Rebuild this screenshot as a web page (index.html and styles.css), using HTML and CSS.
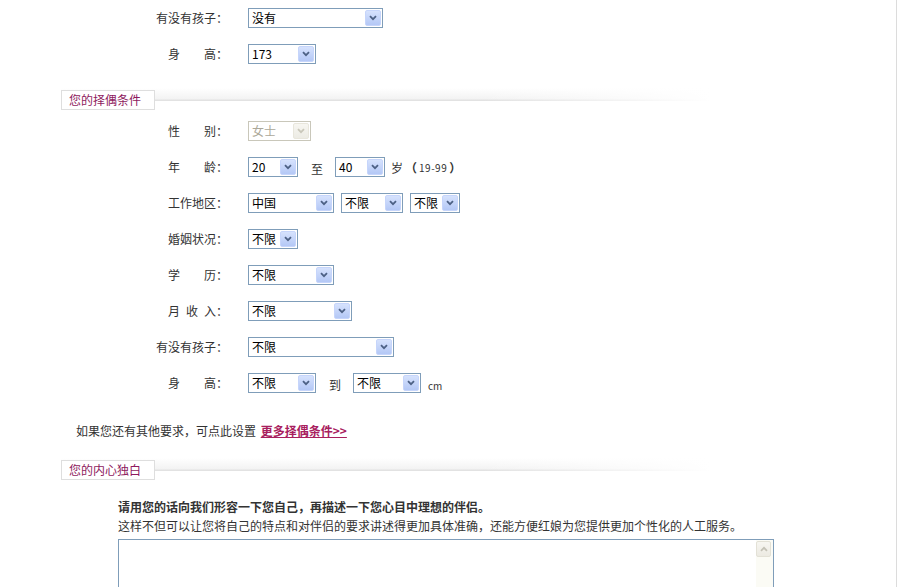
FILE: index.html
```html
<!DOCTYPE html>
<html lang="zh-CN">
<head>
<meta charset="utf-8">
<title>择偶条件</title>
<link rel="stylesheet" href="styles.css">
</head>
<body>
<div class="page">
  <div class="row">
    <span class="lab">有没有孩子：</span>
    <span class="sel w135"><span class="v">没有</span><span class="b"><svg width="8" height="6" viewBox="0 0 8 6"><path d="M1 1.2 L4 4.2 L7 1.2"/></svg></span></span>
  </div>
  <div class="row">
    <span class="lab">身　　高：</span>
    <span class="sel w68"><span class="v">173</span><span class="b"><svg width="8" height="6" viewBox="0 0 8 6"><path d="M1 1.2 L4 4.2 L7 1.2"/></svg></span></span>
  </div>

  <div class="head"><span class="hbox">您的择偶条件</span></div>

  <div class="row first">
    <span class="lab">性　　别：</span>
    <span class="sel w63 dis"><span class="v">女士</span><span class="b"><svg width="8" height="6" viewBox="0 0 8 6"><path d="M1 1.2 L4 4.2 L7 1.2"/></svg></span></span>
  </div>
  <div class="row">
    <span class="lab">年　　龄：</span>
    <span class="sel w50"><span class="v">20</span><span class="b"><svg width="8" height="6" viewBox="0 0 8 6"><path d="M1 1.2 L4 4.2 L7 1.2"/></svg></span></span>
    <span class="mid">至</span>
    <span class="sel w50"><span class="v">40</span><span class="b"><svg width="8" height="6" viewBox="0 0 8 6"><path d="M1 1.2 L4 4.2 L7 1.2"/></svg></span></span>
    <span class="unit">岁<span class="par">（</span><span class="hint">19-99</span><span class="par">）</span></span>
  </div>
  <div class="row">
    <span class="lab">工作地区：</span>
    <span class="sel w86"><span class="v">中国</span><span class="b"><svg width="8" height="6" viewBox="0 0 8 6"><path d="M1 1.2 L4 4.2 L7 1.2"/></svg></span></span>
    <span class="sel w62 gap"><span class="v">不限</span><span class="b"><svg width="8" height="6" viewBox="0 0 8 6"><path d="M1 1.2 L4 4.2 L7 1.2"/></svg></span></span>
    <span class="sel w50 gap"><span class="v">不限</span><span class="b"><svg width="8" height="6" viewBox="0 0 8 6"><path d="M1 1.2 L4 4.2 L7 1.2"/></svg></span></span>
  </div>
  <div class="row">
    <span class="lab">婚姻状况：</span>
    <span class="sel w50"><span class="v">不限</span><span class="b"><svg width="8" height="6" viewBox="0 0 8 6"><path d="M1 1.2 L4 4.2 L7 1.2"/></svg></span></span>
  </div>
  <div class="row">
    <span class="lab">学　　历：</span>
    <span class="sel w86"><span class="v">不限</span><span class="b"><svg width="8" height="6" viewBox="0 0 8 6"><path d="M1 1.2 L4 4.2 L7 1.2"/></svg></span></span>
  </div>
  <div class="row">
    <span class="lab">月&ensp;收&ensp;入：</span>
    <span class="sel w104"><span class="v">不限</span><span class="b"><svg width="8" height="6" viewBox="0 0 8 6"><path d="M1 1.2 L4 4.2 L7 1.2"/></svg></span></span>
  </div>
  <div class="row">
    <span class="lab">有没有孩子：</span>
    <span class="sel w146"><span class="v">不限</span><span class="b"><svg width="8" height="6" viewBox="0 0 8 6"><path d="M1 1.2 L4 4.2 L7 1.2"/></svg></span></span>
  </div>
  <div class="row">
    <span class="lab">身　　高：</span>
    <span class="sel w68"><span class="v">不限</span><span class="b"><svg width="8" height="6" viewBox="0 0 8 6"><path d="M1 1.2 L4 4.2 L7 1.2"/></svg></span></span>
    <span class="mid">到</span>
    <span class="sel w68"><span class="v">不限</span><span class="b"><svg width="8" height="6" viewBox="0 0 8 6"><path d="M1 1.2 L4 4.2 L7 1.2"/></svg></span></span>
    <span class="cm">cm</span>
  </div>

  <p class="more">如果您还有其他要求，可点此设置 <a href="#" class="mlink">更多择偶条件&gt;&gt;</a></p>

  <div class="head head2"><span class="hbox">您的内心独白</span></div>

  <div class="intro">
    <p class="strong">请用您的话向我们形容一下您自己，再描述一下您心目中理想的伴侣。</p>
    <p class="note">这样不但可以让您将自己的特点和对伴侣的要求讲述得更加具体准确，还能方便红娘为您提供更加个性化的人工服务。</p>
    <div class="ta">
      <div class="sb"><span class="sbb"><svg width="8" height="6" viewBox="0 0 8 6"><path d="M1 4.8 L4 1.8 L7 4.8"/></svg></span></div>
    </div>
  </div>
</div>
</body>
</html>
```

FILE: styles.css
```css
html, body {
  margin: 0;
  padding: 0;
  overflow: hidden;
  background: #fff;
}
body {
  font-family: "Noto Sans CJK SC", "Liberation Sans", sans-serif;
  font-size: 12px;
  color: #333;
}
.page {
  width: 897px;
  height: 587px;
  border-right: 1px solid #dcdcdc;
  padding-top: 8px;
  box-sizing: border-box;
}
.row {
  display: flex;
  align-items: center;
  height: 20px;
  margin-bottom: 16px;
}
.row.first {
  margin-top: 11px;
}
.lab {
  width: 228px;
  text-align: right;
  margin-right: 20px;
  color: #333;
  line-height: 20px;
}
.sel {
  display: inline-flex;
  align-items: center;
  justify-content: space-between;
  box-sizing: border-box;
  height: 20px;
  border: 1px solid #7f9db9;
  background: #fff;
  padding-left: 3px;
  padding-right: 1px;
}
.sel .v {
  color: #000;
  line-height: 18px;
}
.sel .b {
  box-sizing: border-box;
  width: 16px;
  height: 16px;
  border: 1px solid #c6d5fb;
  border-radius: 2px;
  background: linear-gradient(#d6e2fd, #b4c8f6);
  display: flex;
  align-items: center;
  justify-content: center;
}
.sel svg path,
.sbb svg path {
  fill: none;
  stroke: #4d6185;
  stroke-width: 1.8;
}
.sel.dis {
  border-color: #c9c7ba;
}
.sel.dis .v {
  color: #aca899;
}
.sel.dis .b {
  border-color: #e8e6dc;
  background: linear-gradient(#f7f6f1, #ecebe4);
}
.sel.dis svg path {
  stroke: #c9c7ba;
}
.w50 { width: 50px; }
.w62 { width: 62px; }
.w63 { width: 63px; }
.w68 { width: 68px; }
.w86 { width: 86px; }
.w104 { width: 104px; }
.w135 { width: 135px; }
.w146 { width: 146px; }
.gap { margin-left: 7px; }
.mid {
  margin: 2px 12px 0 13px;
  color: #333;
}
.unit {
  margin-left: 6px;
  color: #333;
  display: inline-flex;
  align-items: center;
}
.par {
  font-weight: bold;
  margin: 0 2px;
}
.hint {
  font-size: 10px;
  letter-spacing: 0.5px;
}
.cm {
  margin-left: 7px;
  margin-top: 5px;
  font-size: 10px;
  color: #333;
}
.head {
  margin: 24px 0 0 61px;
  width: 650px;
  height: 22px;
  background:
    linear-gradient(to right, rgba(255,255,255,0) 0, rgba(255,255,255,0) 420px, #fff 650px),
    linear-gradient(to bottom, #fff 0, #f3f3f3 11px, #e2e2e2 12px, #e2e2e2 13px, rgba(255,255,255,0) 13px);
  background-repeat: no-repeat;
  background-size: 100% 100%, 100% 13px;
}
.hbox {
  display: inline-block;
  box-sizing: border-box;
  margin-top: 2px;
  width: 94px;
  height: 20px;
  line-height: 18px;
  padding-left: 7px;
  border: 1px solid #dedede;
  background: #fff;
  color: #8e1a5e;
  font-size: 12px;
}
.more {
  margin: 28px 0 0 76px;
  line-height: 20px;
  color: #333;
}
.mlink {
  color: #a8205e;
  font-weight: bold;
  text-decoration: underline;
  margin-left: 2px;
}
.head2 {
  margin-top: 17px;
}
.intro {
  margin: 17px 0 0 118px;
}
.intro p {
  margin: 0;
  line-height: 19px;
}
.strong {
  font-weight: bold;
  color: #333;
}
.note {
  color: #333;
}
.ta {
  margin-top: 4px;
  width: 656px;
  height: 48px;
  box-sizing: border-box;
  border: 1px solid #7f9db9;
  border-bottom: 0;
  display: flex;
  justify-content: flex-end;
}
.sb {
  width: 16px;
  background: #fbfbf5;
  padding: 1px 1px 0 0;
}
.sbb {
  box-sizing: border-box;
  display: flex;
  align-items: center;
  justify-content: center;
  width: 15px;
  height: 16px;
  border: 1px solid #e3e1d6;
  border-radius: 2px;
  background: linear-gradient(#f7f6f1, #eceae2);
}
.sbb svg path {
  stroke: #c4c2b6;
}
```
